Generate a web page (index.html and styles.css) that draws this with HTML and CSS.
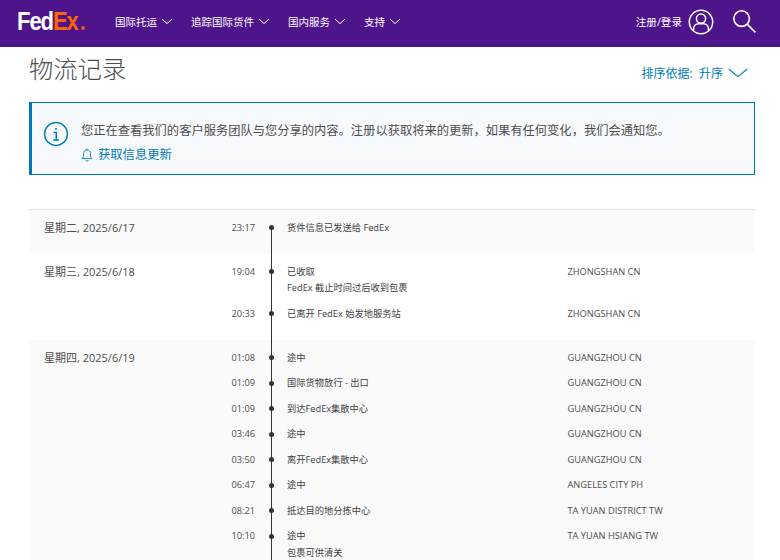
FILE: index.html
```html
<!DOCTYPE html>
<html lang="zh-CN">
<head>
<meta charset="utf-8">
<title>物流记录</title>
<link rel="stylesheet" href="styles.css">
</head>
<body>
<header class="topbar">
  <div class="logo"><div class="wordmark"><span class="fed">Fed</span><span class="ex">Ex</span></div><span class="logo-dot"></span></div>
  <nav class="nav">
    <a class="nav-item">国际托运<svg class="caret" viewBox="0 0 12 7"><path d="M1 1l5 4.6L11 1"/></svg></a>
    <a class="nav-item">追踪国际货件<svg class="caret" viewBox="0 0 12 7"><path d="M1 1l5 4.6L11 1"/></svg></a>
    <a class="nav-item">国内服务<svg class="caret" viewBox="0 0 12 7"><path d="M1 1l5 4.6L11 1"/></svg></a>
    <a class="nav-item">支持<svg class="caret" viewBox="0 0 12 7"><path d="M1 1l5 4.6L11 1"/></svg></a>
  </nav>
  <div class="account">
    <span class="login">注册/登录</span>
    <svg class="user-icon" viewBox="0 0 26 26"><circle cx="13" cy="13" r="11.7"/><circle cx="13" cy="9.6" r="4.6"/><path d="M5.6 21.5v-1.8c0-3 2.4-5 5-5h4.8c2.6 0 5 2 5 5v1.8"/></svg>
    <svg class="search-icon" viewBox="0 0 25 25"><circle cx="9.6" cy="9.6" r="7.8"/><path d="M15.4 15.4l8 8"/></svg>
  </div>
</header>

<main class="page">
  <div class="title-row">
    <h1 class="title">物流记录</h1>
    <div class="sort">排序依据:&nbsp; 升序<svg class="sort-caret" viewBox="0 0 20 10"><path d="M.7 1l9.3 7.6L19.3 1"/></svg></div>
  </div>

  <section class="notice">
    <svg class="info-icon" viewBox="0 0 26 26"><circle cx="13" cy="13" r="11.4"/><circle class="info-dot" cx="13" cy="7.8" r="1"/><path d="M10.5 11.4h2.8v7.4M10.2 18.9h6"/></svg>
    <div class="notice-body">
      <p class="notice-text">您正在查看我们的客户服务团队与您分享的内容。注册以获取将来的更新，如果有任何变化，我们会通知您。</p>
      <a class="notice-link"><svg class="bell" viewBox="0 0 12 14"><path d="M1 10.6c1-1 1.5-1.6 1.5-3.6V5.600c0-2 1.500-3.600 3.500-3.600s3.500 1.600 3.500 3.600V7c0 2 .5 2.600 1.500 3.600zM6 .6V2M4.800 12.200c.3.700.7 1 1.200 1s.9-.3 1.200-1"/></svg>获取信息更新</a>
    </div>
  </section>

  <section class="timeline">
    <div class="day shaded">
      <div class="date">星期二, 2025/6/17</div>
      <div class="rows">
        <div class="row"><span class="time">23:17</span><span class="dot"></span><div class="desc">货件信息已发送给 FedEx</div><span class="loc"></span></div>
      </div>
    </div>
    <div class="day">
      <div class="date">星期三, 2025/6/18</div>
      <div class="rows">
        <div class="row"><span class="time">19:04</span><span class="dot"></span><div class="desc">已收取<div class="sub">FedEx 截止时间过后收到包裹</div></div><span class="loc">ZHONGSHAN CN</span></div>
        <div class="row"><span class="time">20:33</span><span class="dot"></span><div class="desc">已离开 FedEx 始发地服务站</div><span class="loc">ZHONGSHAN CN</span></div>
      </div>
    </div>
    <div class="day shaded">
      <div class="date">星期四, 2025/6/19</div>
      <div class="rows">
        <div class="row"><span class="time">01:08</span><span class="dot"></span><div class="desc">途中</div><span class="loc">GUANGZHOU CN</span></div>
        <div class="row"><span class="time">01:09</span><span class="dot"></span><div class="desc">国际货物放行 - 出口</div><span class="loc">GUANGZHOU CN</span></div>
        <div class="row"><span class="time">01:09</span><span class="dot"></span><div class="desc">到达FedEx集散中心</div><span class="loc">GUANGZHOU CN</span></div>
        <div class="row"><span class="time">03:46</span><span class="dot"></span><div class="desc">途中</div><span class="loc">GUANGZHOU CN</span></div>
        <div class="row"><span class="time">03:50</span><span class="dot"></span><div class="desc">离开FedEx集散中心</div><span class="loc">GUANGZHOU CN</span></div>
        <div class="row"><span class="time">06:47</span><span class="dot"></span><div class="desc">途中</div><span class="loc">ANGELES CITY PH</span></div>
        <div class="row"><span class="time">08:21</span><span class="dot"></span><div class="desc">抵达目的地分拣中心</div><span class="loc">TA YUAN DISTRICT TW</span></div>
        <div class="row"><span class="time">10:10</span><span class="dot"></span><div class="desc">途中<div class="sub">包裹可供清关</div></div><span class="loc">TA YUAN HSIANG TW</span></div>
      </div>
    </div>
  </section>
</main>
</body>
</html>
```

FILE: styles.css
```css
* { box-sizing: border-box; }
html, body { margin: 0; height: 560px; overflow: hidden; background: #fff; }
body { font-family: "Open Sans", "Noto Sans CJK SC", sans-serif; color: #4d4d4d; }

.topbar { height: 47px; background: #4d148c; color: #fff; display: flex; align-items: center; padding: 0 0 4px 17px; }
.logo { width: 98px; display: flex; align-items: baseline; font-family: "Liberation Sans", sans-serif; font-weight: 700; font-size: 25px; line-height: 1; }
.wordmark { width: 64px; flex: none; white-space: nowrap; letter-spacing: -1.2px; transform: scaleX(.88); transform-origin: left center; }
.fed { color: #fff; }
.ex { color: #ff6200; }
.logo-dot { width: 4px; height: 4px; border-radius: 50%; background: #e8590c; }
.nav { display: flex; gap: 18px; }
.nav-item { display: flex; align-items: center; gap: 4px; font-size: 10.5px; }
.caret { width: 12px; height: 7px; fill: none; stroke: #fff; stroke-width: 1; }
.account { margin-left: auto; display: flex; align-items: center; }
.login { font-size: 10.6px; }
.user-icon { width: 26px; height: 26px; margin-left: 6px; fill: none; stroke: #fff; stroke-width: 1.5; }
.search-icon { width: 25px; height: 25px; margin: 0 23px 0 18px; fill: none; stroke: #fff; stroke-width: 1.6; }

.page { padding: 0 25px 0 29px; }
.title-row { display: flex; justify-content: space-between; height: 55px; }
.title { margin: 3px 0 0; font-size: 24.3px; font-weight: 300; line-height: 38px; color: #4d4d4d; }
.sort { display: flex; align-items: center; height: 24px; margin: 14px 7px 0 0; font-size: 12px; color: #007ab7; }
.sort-caret { width: 20px; height: 10px; margin-left: 5px; fill: none; stroke: #007ab7; stroke-width: 1.1; }

.notice { height: 73px; display: flex; align-items: flex-start; background: #f7fafd; border: 1px solid #007ab7; border-left-width: 3px; }
.info-icon { width: 26px; height: 26px; margin: 18px 12px 0 11px; fill: none; stroke: #007ab7; stroke-width: 1.5; flex: none; }
.info-dot { fill: #007ab7; stroke: none; }
.notice-body { padding-top: 18px; }
.notice-text { margin: 0; font-size: 12.27px; line-height: 20px; color: #4d4d4d; }
.notice-link { display: flex; align-items: center; margin-top: 5px; font-size: 12.3px; line-height: 18px; color: #007ab7; }
.bell { width: 12px; height: 14px; margin-right: 5px; fill: none; stroke: #007ab7; stroke-width: .9; }

.timeline { position: relative; margin-top: 34px; border-top: 1px solid #e3e3e3; }
.timeline::before { content: ""; position: absolute; left: 242px; top: 18px; bottom: -400px; width: 1px; background: #333; }
.day { display: flex; padding: 4.75px 0 13.75px 15px; }
.shaded { background: #fafafa; }
.date { width: 155px; flex: none; font-size: 11px; line-height: 25.5px; }
.rows { flex: 1; }
.row { display: flex; align-items: flex-start; font-size: 9.25px; line-height: 25.5px; min-height: 25.5px; }
.time { width: 56px; flex: none; text-align: right; }
.dot { position: relative; z-index: 1; flex: none; width: 5px; height: 5px; margin: 10.5px 13px 0 14px; border-radius: 50%; background: #333; }
.desc { width: 280.5px; flex: none; color: #404040; }
.sub { line-height: 16.5px; margin-top: -4.25px; padding-bottom: 4.25px; }
.loc { flex: none; }
```
